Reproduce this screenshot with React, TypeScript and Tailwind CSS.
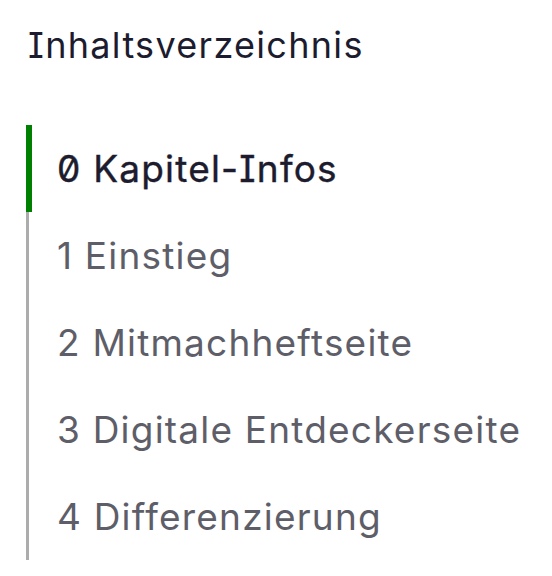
const items = [
  { num: "0", label: "Kapitel-Infos", active: true },
  { num: "1", label: "Einstieg" },
  { num: "2", label: "Mitmachheftseite" },
  { num: "3", label: "Digitale Entdeckerseite" },
  { num: "4", label: "Differenzierung" },
]

export default function App() {
  return (
    <div className="min-h-[576px] w-[552px] bg-white pl-[26px] pt-[21px] font-['Inter',sans-serif] [font-feature-settings:'cv08'_1,'zero'_1]">
      <h2 className="pl-[2px] text-[36px] font-normal leading-[48px] tracking-[1.3px] text-[#1c1c2e]">Inhaltsverzeichnis</h2>
      <ul className="mt-[56px] border-l-[3px] border-[#acacac]">
        {items.map((it) => (
          <li
            key={it.num}
            className={`relative flex h-[87px] items-center pl-[28px] text-[37px] tracking-[1.2px] ${it.active ? "text-[#1c1c2e] [-webkit-text-stroke:0.4px_#1c1c2e]" : "text-[#5e5e69]"}`}
          >
            {it.active && <span className="absolute -left-[3px] top-0 h-full w-[6px] bg-[#008000]" />}
            {it.num} {it.label}
          </li>
        ))}
      </ul>
    </div>
  )
}
